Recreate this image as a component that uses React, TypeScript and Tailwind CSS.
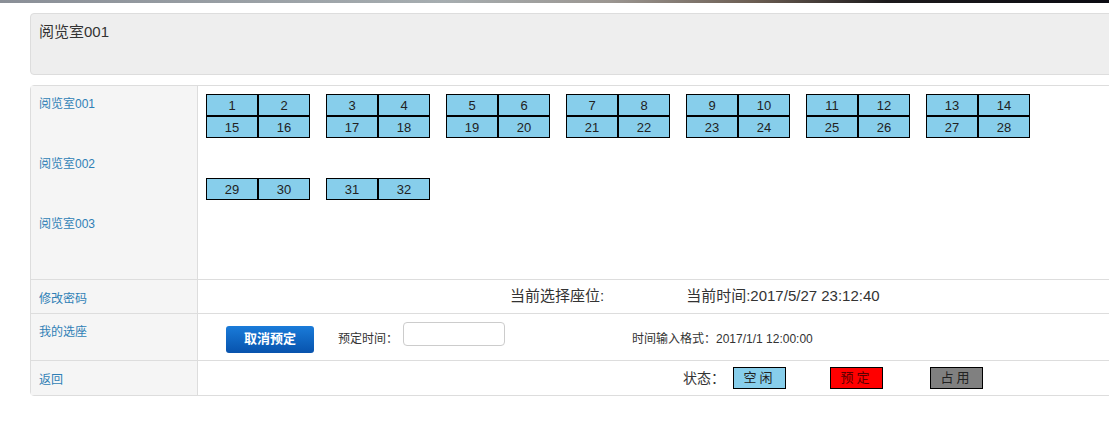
import React from "react";

const font = "font-['Liberation_Sans','Noto_Sans_CJK_SC',sans-serif]";

type SeatState = "free" | "booked" | "used";

const seatColor: Record<SeatState, string> = {
  free: "bg-[#87ceeb] text-[#222]",
  booked: "bg-[#ff0000] text-[#5a0000]",
  used: "bg-[#808080] text-[#222]",
};

function Seat({ n, state = "free" }: { n: number; state?: SeatState }) {
  return (
    <div
      className={`w-[52px] h-[22px] border border-black ${seatColor[state]} flex items-center justify-center text-[13px] leading-none`}
    >
      {n}
    </div>
  );
}

function Pair({ top, bottom }: { top: [number, number]; bottom?: [number, number] }) {
  return (
    <div className="flex flex-col">
      <div className="flex">
        <Seat n={top[0]} state={top[0] === 2 ? "booked" : "free"} />
        <Seat n={top[1]} />
      </div>
      {bottom && (
        <div className="flex">
          <Seat n={bottom[0]} />
          <Seat n={bottom[1]} />
        </div>
      )}
    </div>
  );
}

function StatusBox({ label, color }: { label: string; color: string }) {
  return (
    <div
      className={`w-[53px] h-[22px] border border-black ${color} flex items-center justify-center text-[13px] tracking-[3px]`}
    >
      {label}
    </div>
  );
}

export default function App() {
  const room1 = Array.from({ length: 7 }, (_, i) => i * 2 + 1);
  const linkCls = "text-[12px] text-[#2f7fb5] leading-[17px]";

  return (
    <div className={`w-full min-h-[426px] overflow-hidden bg-white ${font} text-[#333]`}>
      <div className="h-[3px] bg-[linear-gradient(90deg,#8a8f97_0%,#a6adb0_40%,#9b9691_55%,#6b5d52_68%,#1c1a1c_80%,#0b0b12_100%)]" />

      <div className="pl-[30px]">
        <div className="mt-[10px] w-[1100px] h-[62px] rounded-[4px] border border-[#dddddd] bg-[#eeeeee] px-[8px] pt-[8px]">
          <h1 className="text-[15px] leading-[20px] text-[#333]">阅览室001</h1>
        </div>

        <div className="mt-[10px] w-[1100px] rounded-[4px] border border-[#dddddd]">
          <div className="flex h-[194px] border-b border-[#dddddd]">
            <div className="w-[167px] shrink-0 border-r border-[#dddddd] bg-[#f5f5f5] pl-[8px] pt-[5px]">
              <div className="h-[60px]"><a className={linkCls}>阅览室001</a></div>
              <div className="h-[60px]"><a className={linkCls}>阅览室002</a></div>
              <div className="h-[60px]"><a className={linkCls}>阅览室003</a></div>
            </div>
            <div className="pl-[8px] pt-[8px]">
              <div className="flex gap-[16px]">
                {room1.map((n) => (
                  <Pair key={n} top={[n, n + 1]} bottom={[n + 14, n + 15]} />
                ))}
              </div>
              <div className="mt-[40px] flex gap-[16px]">
                <Pair top={[29, 30]} />
                <Pair top={[31, 32]} />
              </div>
            </div>
          </div>

          <div className="flex h-[34px] border-b border-[#dddddd]">
            <div className="w-[167px] shrink-0 border-r border-[#dddddd] bg-[#f5f5f5] pl-[8px] pt-[6px]">
              <a className={linkCls}>修改密码</a>
            </div>
            <div className="flex items-center text-[15px] text-[#333]">
              <span className="ml-[312px]">当前选择座位:</span>
              <span className="ml-[82px]">当前时间:2017/5/27 23:12:40</span>
            </div>
          </div>

          <div className="flex h-[47px] border-b border-[#dddddd]">
            <div className="w-[167px] shrink-0 border-r border-[#dddddd] bg-[#f5f5f5] pl-[8px] pt-[5px]">
              <a className={linkCls}>我的选座</a>
            </div>
            <div className="flex items-center pt-[4px] text-[12px]">
              <button className="ml-[28px] h-[27px] w-[88px] rounded-[3px] bg-linear-to-b from-[#1a7bd9] to-[#0853ad] text-[13px] font-bold text-white">
                取消预定
              </button>
              <span className="ml-[24px] text-[#333]">预定时间：</span>
              <input className="ml-[5px] mb-[10px] h-[24px] w-[102px] rounded-[4px] border border-[#cccccc] bg-white px-2 outline-none" />
              <span className="ml-[127px] text-[#333]">时间输入格式：2017/1/1 12:00:00</span>
            </div>
          </div>

          <div className="flex h-[34px]">
            <div className="w-[167px] shrink-0 border-r border-[#dddddd] bg-[#f5f5f5] pl-[8px] pt-[6px]">
              <a className={linkCls}>返回</a>
            </div>
            <div className="flex items-center">
              <span className="ml-[485px] text-[14px] text-[#333]">状态：</span>
              <div className="ml-[8px]">
                <StatusBox label="空闲" color="bg-[#87ceeb] text-[#222]" />
              </div>
              <div className="ml-[44px]">
                <StatusBox label="预定" color="bg-[#ff0000] text-[#5a0000]" />
              </div>
              <div className="ml-[47px]">
                <StatusBox label="占用" color="bg-[#808080] text-[#222]" />
              </div>
            </div>
          </div>
        </div>
      </div>
    </div>
  );
}
